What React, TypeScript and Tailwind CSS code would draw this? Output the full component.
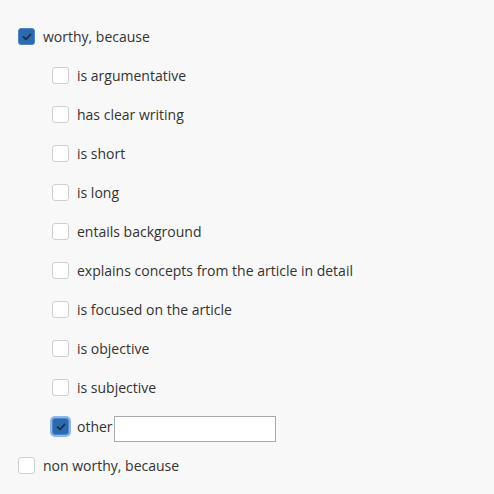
import React from "react";

function Box({ checked, focus }: { checked?: boolean; focus?: boolean }) {
  if (checked) {
    return (
      <span
        className={
          "flex h-[17px] w-[17px] shrink-0 items-center justify-center rounded-[3px] border border-[#4f86c9] bg-[#2d69ad]" +
          (focus ? " shadow-[0_0_0_2px_#8fb6e8]" : "")
        }
      >
        <svg width="10" height="8" viewBox="0 0 10 8">
          <path d="M1.5 4 L4 6.3 L8.5 1.5" fill="none" stroke="#1b2f4d" strokeWidth="1.8" strokeLinecap="round" strokeLinejoin="round" />
        </svg>
      </span>
    );
  }
  return <span className="h-[17px] w-[17px] shrink-0 rounded-[3px] border border-[#cfcfcf] bg-white" />;
}

const items = [
  "is argumentative",
  "has clear writing",
  "is short",
  "is long",
  "entails background",
  "explains concepts from the article in detail",
  "is focused on the article",
  "is objective",
  "is subjective",
];

export default function App() {
  return (
    <div
      className="h-[494px] w-[494px] bg-[#f8f8f8] pt-[17px] text-[14px] text-[#333333]"
      style={{ fontFamily: '"Open Sans", "Noto Sans", sans-serif' }}
    >
      <div className="flex h-[39px] items-center gap-[8px] pl-[18px]">
        <Box checked />
        <span>worthy, because</span>
      </div>
      {items.map((t) => (
        <div key={t} className="flex h-[39px] items-center gap-[8px] pl-[52px]">
          <Box />
          <span>{t}</span>
        </div>
      ))}
      <div className="flex h-[39px] items-center gap-[8px] pl-[52px]">
        <Box checked focus />
        <span className="flex items-center">
          other
          <span className="ml-[1px] mt-[5px] block h-[26px] w-[162px] border border-[#a9a9a9] bg-white" />
        </span>
      </div>
      <div className="flex h-[39px] items-center gap-[8px] pl-[18px]">
        <Box />
        <span>non worthy, because</span>
      </div>
    </div>
  );
}
